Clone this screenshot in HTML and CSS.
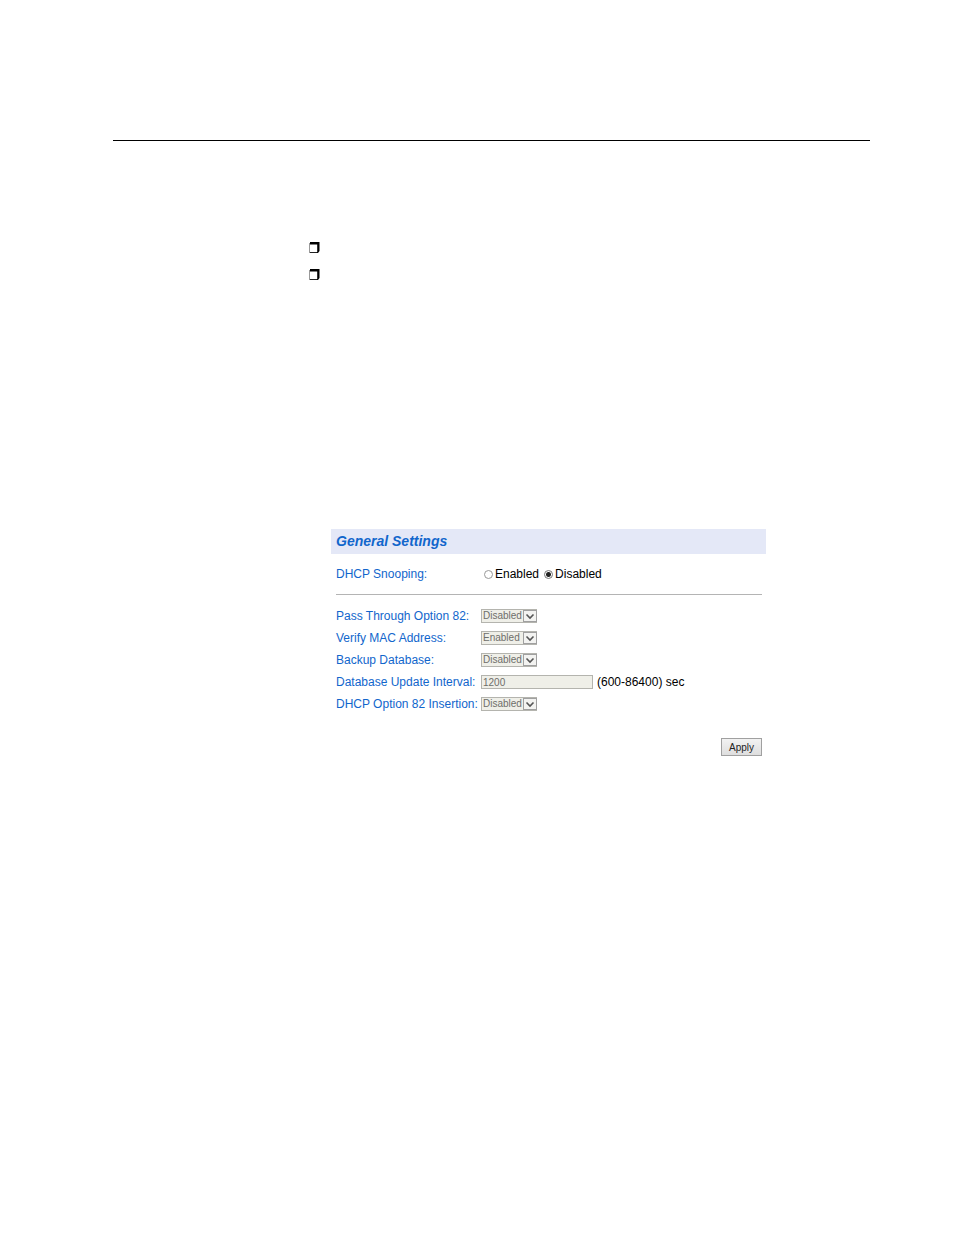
FILE: index.html
```html
<!DOCTYPE html>
<html lang="en">
<head>
  <meta charset="UTF-8" />
  <meta name="viewport" content="width=device-width, initial-scale=1" />
  <title>General Settings</title>
  <link rel="stylesheet" href="styles.css">
</head>
<body>
  <svg class="sprite">
    <symbol id="box" viewBox="0 0 11 11">
      <path d="M0.5 1V11" stroke="#999" fill="none" />
      <path d="M1 10.5H9" stroke="#222" fill="none" />
      <path d="M1 0H10.5V9L9 11H8.2V2.5H1Z" fill="#000" />
    </symbol>
    <symbol id="arrow" viewBox="0 0 14 12">
      <rect x="0.5" y="0.5" width="13" height="11" fill="#f3f3f1" stroke="#a0a0a0" />
      <path d="M3.5 4.5L7 8L10.5 4.5" fill="none" stroke="#555" stroke-width="1.6" />
    </symbol>
  </svg>

  <main class="page">
    <hr class="page-rule" />

    <ul class="bullets">
      <li><svg class="box"><use href="#box" /></svg></li>
      <li><svg class="box"><use href="#box" /></svg></li>
    </ul>

    <form class="panel">
      <h1>General Settings</h1>

      <div class="panel-body">
        <div class="row" role="radiogroup" aria-labelledby="snooping">
          <span class="label" id="snooping">DHCP Snooping:</span>
          <div class="radios">
            <label><input type="radio" name="snooping" value="1" />Enabled</label>
            <label><input type="radio" name="snooping" value="0" checked />Disabled</label>
          </div>
        </div>

        <hr class="divider" />

        <div class="row">
          <label class="label" for="pass">Pass Through Option 82:</label>
          <div class="select">
            <select id="pass" disabled><option>Enabled</option><option selected>Disabled</option></select>
            <svg><use href="#arrow" /></svg>
          </div>
        </div>
        <div class="row">
          <label class="label" for="verify">Verify MAC Address:</label>
          <div class="select">
            <select id="verify" disabled><option selected>Enabled</option><option>Disabled</option></select>
            <svg><use href="#arrow" /></svg>
          </div>
        </div>
        <div class="row">
          <label class="label" for="backup">Backup Database:</label>
          <div class="select">
            <select id="backup" disabled><option>Enabled</option><option selected>Disabled</option></select>
            <svg><use href="#arrow" /></svg>
          </div>
        </div>
        <div class="row">
          <label class="label" for="interval">Database Update Interval:</label>
          <div class="interval">
            <input type="text" id="interval" value="1200" disabled />
            <span>(600-86400) sec</span>
          </div>
        </div>
        <div class="row">
          <label class="label" for="insertion">DHCP Option 82 Insertion:</label>
          <div class="select">
            <select id="insertion" disabled><option>Enabled</option><option selected>Disabled</option></select>
            <svg><use href="#arrow" /></svg>
          </div>
        </div>

        <div class="actions">
          <button type="submit">Apply</button>
        </div>
      </div>
    </form>
  </main>
</body>
</html>
```

FILE: styles.css
```css
* {
  box-sizing: border-box;
}

body {
  margin: 0;
  background: #fff;
  color: #000;
  font-family: "Liberation Sans", Arial, Helvetica, sans-serif;
  font-size: 12px;
  line-height: 22px;
}

.sprite {
  display: block;
  width: 0;
  height: 0;
}

.page {
  padding: 140px 84px 60px 113px;
}

.page-rule {
  margin: 0;
  border: none;
  border-top: 1px solid #000;
}

.bullets {
  list-style: none;
  margin: 101px 0 0 196px;
  padding: 0;
}

.bullets li {
  height: 11px;
  margin-bottom: 16px;
}

.box {
  display: block;
  width: 11px;
  height: 11px;
}

.panel {
  max-width: 435px;
  margin: 249px 0 0 218px;
}

h1 {
  margin: 0;
  padding: 0 5px;
  background: #e4e8f7;
  color: #1166cc;
  font-size: 14px;
  font-style: italic;
  font-weight: bold;
  line-height: 25px;
}

.panel-body {
  padding: 9px 4px 0 5px;
}

.row {
  display: grid;
  grid-template-columns: 145px 1fr;
  align-items: center;
  height: 22px;
}

.label {
  color: #1166cc;
  white-space: nowrap;
}

.radios {
  display: flex;
  gap: 5px;
  padding-left: 3px;
}

.radios label {
  display: flex;
  align-items: center;
  gap: 2px;
}

input[type="radio"] {
  appearance: none;
  width: 9px;
  height: 9px;
  margin: 0;
  border: 1px solid #999;
  border-radius: 50%;
  background: #fff;
}

input[type="radio"]:checked {
  border-color: #777;
  background: radial-gradient(circle, #222 0 2px, #fff 3px);
}

.divider {
  margin: 9px 0 10px;
  border: none;
  border-top: 1px solid #b4b4b4;
}

.select {
  position: relative;
  width: 56px;
  height: 14px;
}

.select svg {
  position: absolute;
  top: 1px;
  right: 0;
  width: 14px;
  height: 12px;
  pointer-events: none;
}

select,
input[type="text"] {
  appearance: none;
  display: block;
  height: 14px;
  margin: 0;
  padding: 0 1px;
  border: 1px solid #b4b4ae;
  border-radius: 0;
  background: #efefe8;
  color: #6e6e6a;
  font-family: inherit;
  font-size: 10px;
  line-height: 12px;
  opacity: 1;
}

select {
  width: 100%;
}

.interval {
  display: flex;
  align-items: center;
  gap: 4px;
}

input[type="text"] {
  width: 112px;
}

.actions {
  display: flex;
  justify-content: flex-end;
  margin-top: 23px;
}

button {
  width: 41px;
  height: 18px;
  padding: 0;
  border: 1px solid #a0a0a0;
  background: linear-gradient(#f2f2f2, #dedede);
  color: #222;
  font-family: inherit;
  font-size: 10px;
}
```
